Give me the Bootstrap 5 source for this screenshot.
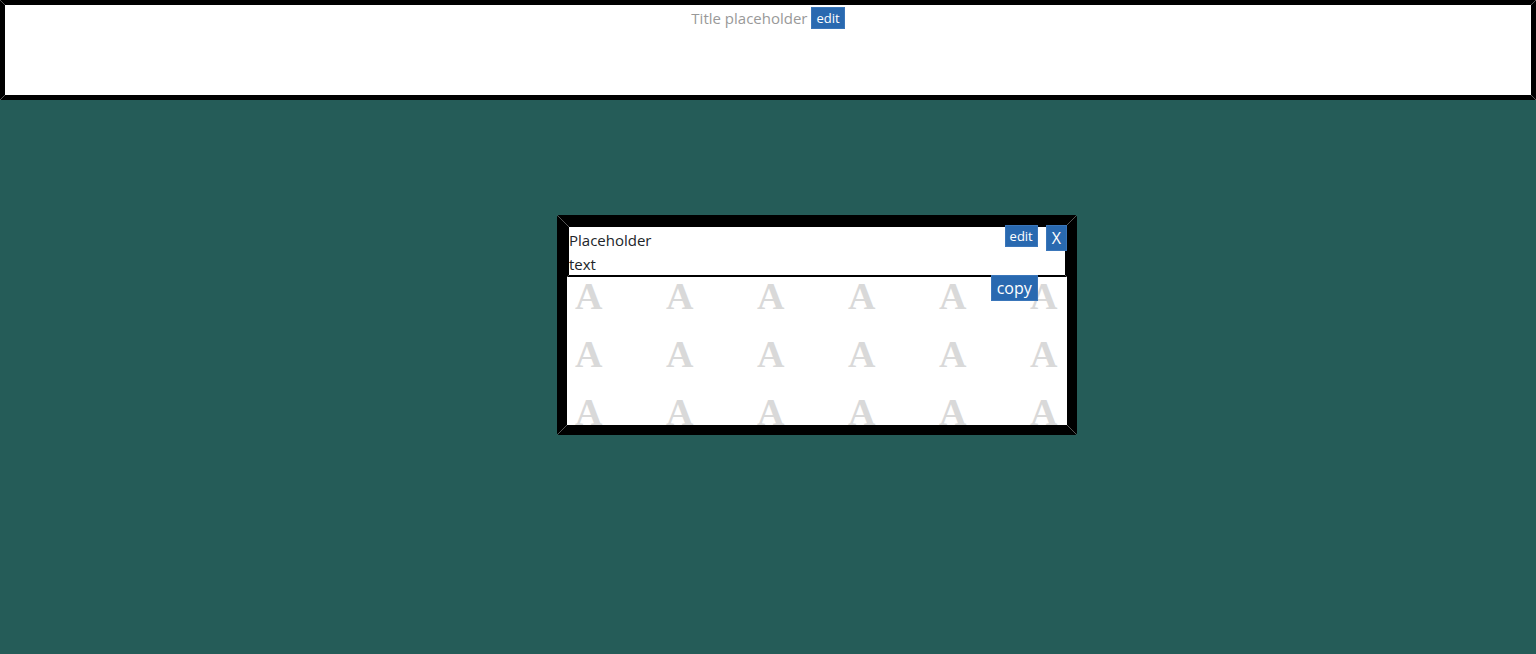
<!DOCTYPE html>
<html lang="en">
<head>
<meta charset="utf-8">
<meta name="viewport" content="width=device-width, initial-scale=1">
<title>Title placeholder</title>
<link href="https://cdn.jsdelivr.net/npm/bootstrap@5.3.0/dist/css/bootstrap.min.css" rel="stylesheet">
<style>
  body { background: #255c58; color: #212529; font-family: "Open Sans", sans-serif; font-size: 15px; line-height: 24px; }
  /* black frame with a thin mitre line in each corner */
  .frame {
    --edge: 5px;
    --down: linear-gradient(45deg, transparent 46%, #555 49% 51%, transparent 54%);
    --up: linear-gradient(135deg, transparent 46%, #555 49% 51%, transparent 54%);
    border: var(--edge) solid transparent;
    background:
      linear-gradient(#fff, #fff) padding-box,
      var(--down) left top / var(--edge) var(--edge) no-repeat border-box,
      var(--up) right top / var(--edge) var(--edge) no-repeat border-box,
      var(--up) left bottom / var(--edge) var(--edge) no-repeat border-box,
      var(--down) right bottom / var(--edge) var(--edge) no-repeat border-box,
      linear-gradient(#000, #000) border-box;
  }
  .title-bar { height: 100px; padding-top: 2px; }
  .title-text { color: #999; line-height: 22px; }
  .tool { padding: 0 5px; border: 1px solid #3a76ba; border-radius: 0; background: #2969b0; color: #fff; font-size: 16px; line-height: 24px; }
  .tool:hover { background: #1f5796; color: #fff; }
  .tool-sm { padding: 0 4px; font-size: 13px; line-height: 20px; }
  .workspace { padding: 115px 0 0 98px; }
  .note { --edge: 10px; width: 520px; max-width: 100%; height: 220px; border-radius: 2px; }
  .note-head { --edge: 2px; height: 52px; }
  .note-text { width: 90px; line-height: 24px; padding-top: 1px; }
  .note-tools { grid-template-columns: auto auto; grid-template-rows: 50px auto; column-gap: 8px; }
  .letters { grid-template-columns: repeat(6, 91px); grid-auto-rows: 58px; height: 148px; padding-left: 8px;
    font: bold 38px/38px "Liberation Serif", serif; color: #d9d9d9; }
</style>
</head>
<body>
<header class="frame title-bar d-flex justify-content-center align-items-start gap-1">
  <span class="title-text">Title placeholder</span>
  <button type="button" class="btn tool tool-sm">edit</button>
</header>
<main class="workspace">
  <section class="frame note mx-auto position-relative">
    <div class="frame note-head"><p class="note-text m-0">Placeholder text</p></div>
    <div class="letters d-grid overflow-hidden" aria-hidden="true">
      <span>A</span><span>A</span><span>A</span><span>A</span><span>A</span><span>A</span>
      <span>A</span><span>A</span><span>A</span><span>A</span><span>A</span><span>A</span>
      <span>A</span><span>A</span><span>A</span><span>A</span><span>A</span><span>A</span>
    </div>
    <div class="note-tools position-absolute top-0 end-0 d-grid align-items-start">
      <button type="button" class="btn tool tool-sm ms-auto">edit</button>
      <button type="button" class="btn tool">X</button>
      <button type="button" class="btn tool">copy</button>
    </div>
  </section>
</main>
<script src="https://cdn.jsdelivr.net/npm/bootstrap@5.3.0/dist/js/bootstrap.bundle.min.js"></script>
</body>
</html>
